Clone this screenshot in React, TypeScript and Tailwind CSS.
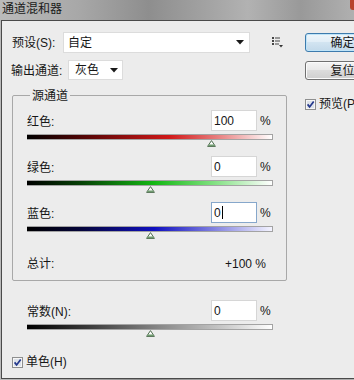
import React from 'react';

type Channel = {
  label: string;
  value: number;
  bar: string;
  focused?: boolean;
};

const channels: Channel[] = [
  { label: '红色:', value: 100, bar: 'bg-[linear-gradient(to_right,#000_0%,#5a0606_25%,#d01818_58%,#e88080_78%,#fff_100%)]' },
  { label: '绿色:', value: 0, bar: 'bg-[linear-gradient(to_right,#000_0%,#064006_22%,#14b814_52%,#80e080_76%,#fff_100%)]' },
  { label: '蓝色:', value: 0, bar: 'bg-[linear-gradient(to_right,#000_0%,#05053a_22%,#1010c0_52%,#8080e0_76%,#f4f4ff_100%)]', focused: true },
];

const Arrow = () => (
  <svg width="8" height="5" viewBox="0 0 8 5">
    <path d="M0 0 H8 L4 4.5 Z" fill="#1a1a1a" />
  </svg>
);

const CheckBox = () => (
  <svg width="11" height="11" viewBox="0 0 11 11">
    <rect x="0.5" y="0.5" width="10" height="10" fill="#f6f6f6" stroke="#8e8f8f" />
    <rect x="2" y="2" width="7" height="7" fill="#dde2e9" />
    <path d="M2.6 5.4 L4.6 7.9 L8.7 2.4" fill="none" stroke="#24388c" strokeWidth="1.7" />
  </svg>
);

const Thumb = ({ left }: { left: number }) => (
  <svg width="9" height="7" viewBox="0 0 9 7" className="absolute top-0" style={{ left }}>
    <path d="M4.5 0.6 L8.4 6.4 H0.6 Z" fill="#ffffff" stroke="#4d6b4d" strokeWidth="1" />
    <path d="M2 4.4 H7 L8 6 H1 Z" fill="#6f9b6f" />
  </svg>
);

const ValueRow = ({ label, value, focused }: { label: string; value: number; focused?: boolean }) => (
  <div className="flex h-[21px] w-[246px] items-center">
    <span className="flex-1 pt-[2px]">{label}</span>
    <div
      className={`flex h-[21px] w-[46px] items-center border bg-white pl-[2px] ${
        focused ? 'border-[#86a7cb]' : 'border-[#d6d6d6]'
      }`}
    >
      {value}
      {focused && <span className="ml-[1px] h-[13px] w-px bg-black" />}
    </div>
    <span className="w-[16px] pl-[3px]">%</span>
  </div>
);

const Slider = ({ value, bar }: { value: number; bar: string }) => {
  const center = ((value + 200) / 400) * 246;
  return (
    <div className="w-[246px]">
      <div className={`mt-[3px] h-[6px] w-[246px] border-y border-r border-[#a3a3a3] ${bar}`} />
      <div className="relative h-[7px] w-[246px]">
        <Thumb left={center - 4.5} />
      </div>
    </div>
  );
};

export default function App() {
  return (
    <div className="h-[380px] w-[354px] overflow-hidden bg-[linear-gradient(to_right,#bababa_0%,#a8a8a8_22%,#8e8e8e_42%,#a2a2a2_58%,#b2b2b2_70%,#999_85%,#b0b0b0_100%)] font-['Liberation_Sans','Noto_Sans_CJK_SC',sans-serif] text-[12px] text-[#161616]">
      {/* Title bar */}
      <div className="flex h-[20px] items-start justify-between">
        <span className="pl-[2px] pt-[1px] text-[12px] leading-[16px] text-[#1a1a1a]">通道混和器</span>
        <span className="h-[10px] w-[4px] rounded-bl-[3px] bg-[#b8432e]" />
      </div>

      {/* Dialog body */}
      <div className="ml-[1px] flex h-[359px] w-[400px] border-y border-l border-[#4a4a4a] bg-[#ececec] leading-[14px]">
        <div className="flex w-[303px] shrink-0 flex-col">
          <div className="mt-[11px] flex h-[21px] items-center">
            <span className="w-[61px] pl-[10px] pt-[1px]">预设(S):</span>
            <div className="flex h-[21px] w-[187px] items-center justify-between border border-[#dcdcdc] bg-white pl-[4px] pr-[5px]">
              <span>自定</span>
              <Arrow />
            </div>
            <svg width="12" height="11" viewBox="0 0 12 11" className="ml-[22px]">
              <rect x="0" y="0" width="2" height="2" fill="#444" />
              <rect x="3" y="0.5" width="5" height="1" fill="#444" />
              <rect x="0" y="3" width="2" height="2" fill="#444" />
              <rect x="3" y="3.5" width="5" height="1" fill="#444" />
              <rect x="0" y="6" width="2" height="2" fill="#444" />
              <rect x="3" y="6.5" width="4" height="1" fill="#444" />
              <path d="M7 8 H11 L9 10.5 Z" fill="#333" />
            </svg>
          </div>

          <div className="mt-[7px] flex h-[20px] items-center">
            <span className="w-[66px] pl-[9px] pt-[1px]">输出通道:</span>
            <div className="flex h-[20px] w-[55px] items-center justify-between border border-[#dcdcdc] bg-white pl-[6px] pr-[4px]">
              <span>灰色</span>
              <Arrow />
            </div>
          </div>

          {/* Source channels group */}
          <div className="ml-[10px] mt-[15px] w-[275px] rounded-[2px] border border-[#a8a8a8] pb-[9px] pl-[14px]">
            <div className="-mt-[7px] ml-[3px] w-fit bg-[#ececec] px-[2px] leading-[14px]">源通道</div>
            <div className="mt-[7px] flex flex-col">
              {channels.map((c, i) => (
                <div key={c.label} className={i < channels.length - 1 ? 'mb-[9px]' : ''}>
                  <ValueRow label={c.label} value={c.value} focused={c.focused} />
                  <Slider value={c.value} bar={c.bar} />
                </div>
              ))}
            </div>
            <div className="mt-[18px] flex w-[246px] justify-between pr-[7px] leading-[14px]">
              <span>总计:</span>
              <span>+100 %</span>
            </div>
          </div>

          <div className="mt-[19px] pl-[25px]">
            <ValueRow label="常数(N):" value={0} />
            <Slider value={0} bar="bg-[linear-gradient(to_right,#000_0%,#3a3a3a_25%,#8a8a8a_55%,#c8c8c8_80%,#fff_100%)]" />
          </div>

          <div className="mt-[18px] flex items-center pl-[10px]">
            <CheckBox />
            <span className="ml-[3px]">单色(H)</span>
          </div>
        </div>

        {/* Buttons */}
        <div className="flex shrink-0 flex-col">
          <button className="mt-[12px] h-[19px] w-[75px] rounded-[3px] border border-[#3d7bad] bg-[linear-gradient(to_bottom,#eef6fb_0%,#e2eef7_45%,#d2e4f1_50%,#c2d9ea_100%)] text-[12px] leading-[14px] shadow-[inset_0_0_0_1px_#bfe4f8]">
            确定
          </button>
          <button className="mt-[9px] h-[19px] w-[75px] rounded-[3px] border border-[#707070] bg-[linear-gradient(to_bottom,#f4f4f4_0%,#e9e9e9_45%,#dcdcdc_50%,#cfcfcf_100%)] text-[12px] leading-[14px] shadow-[inset_0_0_0_1px_#fbfbfb]">
            复位
          </button>
          <div className="mt-[17px] flex items-center">
            <CheckBox />
            <span className="ml-[3px]">预览(P)</span>
          </div>
        </div>
      </div>
    </div>
  );
}
